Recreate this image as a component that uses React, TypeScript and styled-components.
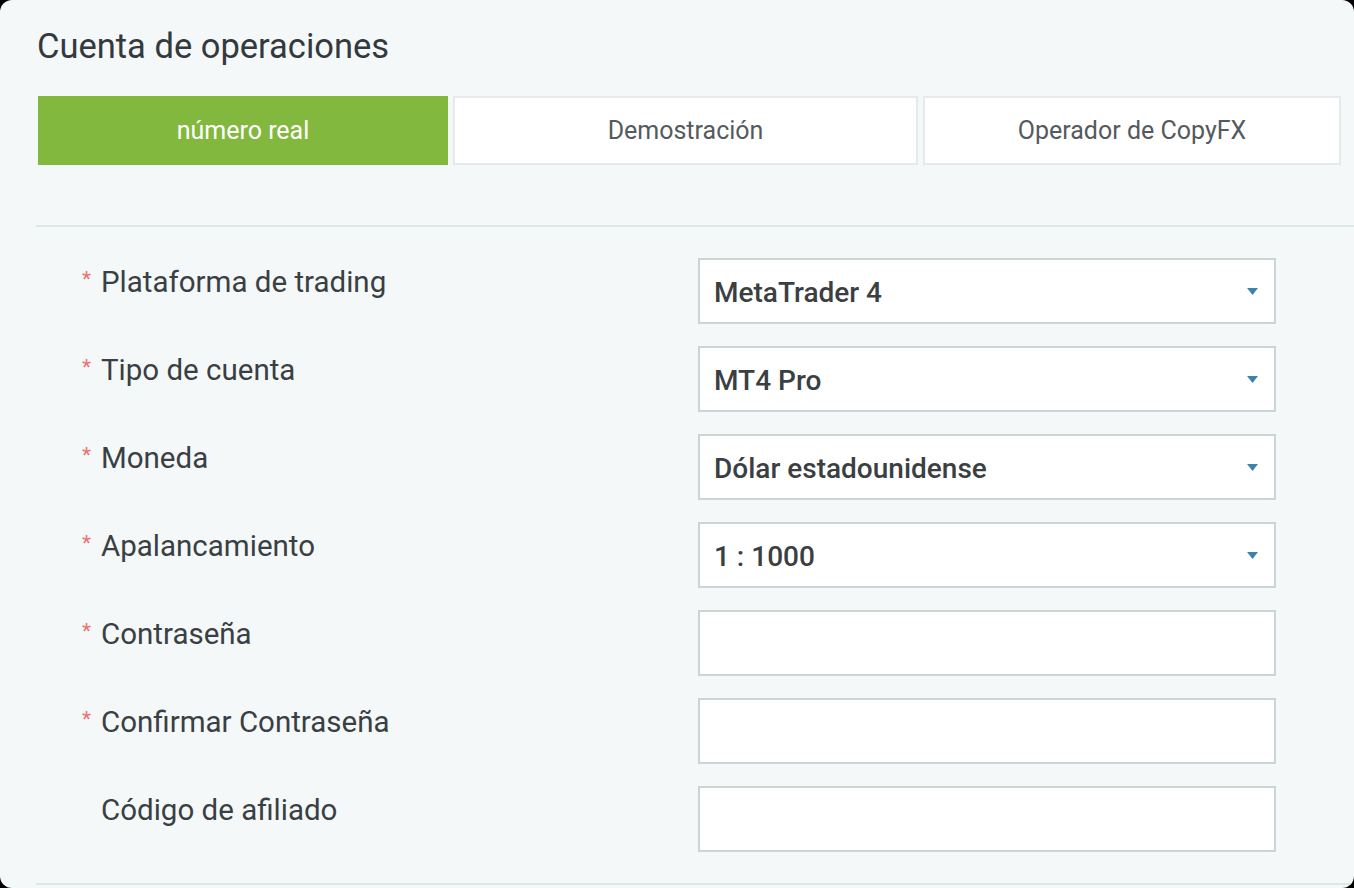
import React from "react";
import styled, { createGlobalStyle } from "styled-components";

const Global = createGlobalStyle`
  html, body { margin: 0; padding: 0; background: #000; }
  body { font-family: Roboto, "Noto Sans", "Liberation Sans", sans-serif; }
  * { box-sizing: border-box; }
`;

const Card = styled.div`
  width: 1354px;
  height: 888px;
  background: #f4f8f9;
  border-radius: 12px;
  padding-left: 36px;
  overflow: hidden;
`;

const Title = styled.h1`
  margin: 0;
  padding: 26px 0 0 1px;
  font-size: 34.5px;
  line-height: 40px;
  font-weight: 400;
  color: #33393d;
`;

const Tabs = styled.div`
  display: grid;
  grid-template-columns: 410px 465px 418px;
  column-gap: 5px;
  margin: 30px 0 0 2px;
`;

const Tab = styled.div<{ $active?: boolean }>`
  height: 69px;
  display: flex;
  align-items: center;
  justify-content: center;
  font-size: 25px;
  color: ${(p) => (p.$active ? "#ffffff" : "#555a5e")};
  background: ${(p) => (p.$active ? "#83b83f" : "#ffffff")};
  border: 2px solid ${(p) => (p.$active ? "#83b83f" : "#e6eaeb")};
`;

const Divider = styled.div<{ $top: number }>`
  margin-top: ${(p) => p.$top}px;
  height: 2px;
  background: #dfe8e9;
`;

const Form = styled.div`
  display: flex;
  flex-direction: column;
  gap: 22px;
  padding: 31px 0 0 46px;
`;

const Row = styled.div`
  display: grid;
  grid-template-columns: 616px 578px;
  height: 66px;
`;

const Label = styled.div`
  padding-top: 7px;
  font-size: 29.5px;
  line-height: 34px;
  color: #3a3f43;
  display: flex;
`;

const Star = styled.span`
  width: 19px;
  padding-top: 3px;
  color: #f26d6d;
  font-size: 21px;
  line-height: 22px;
`;

const Box = styled.div`
  height: 66px;
  background: #ffffff;
  border: 2px solid #cbd5d5;
  display: flex;
  align-items: center;
  padding: 0 16px 0 14px;
`;

const Value = styled.span`
  flex: 1;
  font-size: 28px;
  font-weight: 500;
  color: #3b3f42;
  padding-top: 2px;
`;

const Arrow = () => (
  <svg width="11" height="7" viewBox="0 0 11 7">
    <path d="M0 0 H11 L5.5 7 Z" fill="#3f82a8" />
  </svg>
);

type Field = { label: string; required: boolean; value?: string; select?: boolean };

const fields: Field[] = [
  { label: "Plataforma de trading", required: true, value: "MetaTrader 4", select: true },
  { label: "Tipo de cuenta", required: true, value: "MT4 Pro", select: true },
  { label: "Moneda", required: true, value: "Dólar estadounidense", select: true },
  { label: "Apalancamiento", required: true, value: "1 : 1000", select: true },
  { label: "Contraseña", required: true },
  { label: "Confirmar Contraseña", required: true },
  { label: "Código de afiliado", required: false },
];

export default function App() {
  return (
    <>
      <Global />
      <Card>
        <Title>Cuenta de operaciones</Title>
        <Tabs>
          <Tab $active>número real</Tab>
          <Tab>Demostración</Tab>
          <Tab>Operador de CopyFX</Tab>
        </Tabs>
        <Divider $top={60} />
        <Form>
          {fields.map((f) => (
            <Row key={f.label}>
              <Label>
                <Star>{f.required ? "*" : ""}</Star>
                {f.label}
              </Label>
              <Box>
                <Value>{f.value ?? ""}</Value>
                {f.select && <Arrow />}
              </Box>
            </Row>
          ))}
        </Form>
        <Divider $top={31} />
      </Card>
    </>
  );
}
